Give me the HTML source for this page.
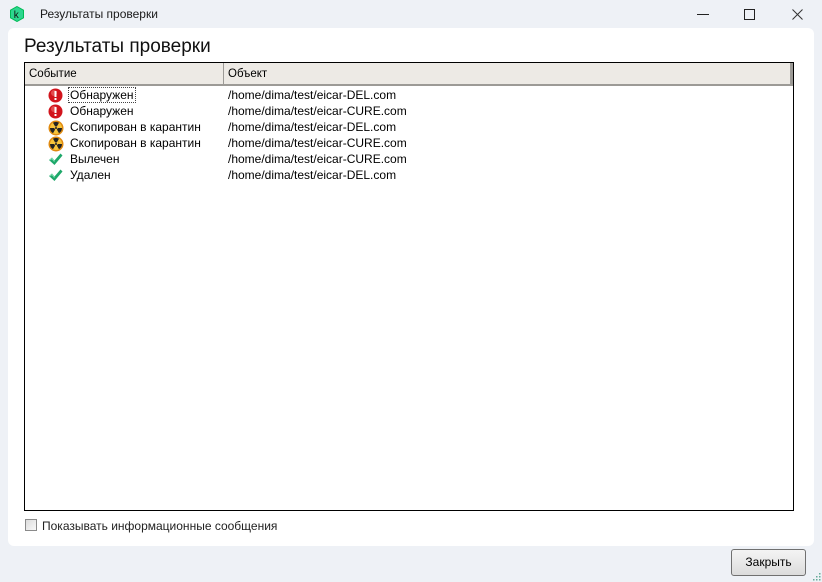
<!DOCTYPE html>
<html><head><meta charset="utf-8"><style>
*{margin:0;padding:0;box-sizing:border-box}
body{width:822px;height:582px;background:#eef1f6;font-family:"Liberation Sans","DejaVu Sans",sans-serif;position:relative;overflow:hidden;color:#000}
.title{position:absolute;left:40px;top:7px;font-size:12px;color:#1a1a1a}
.logo{position:absolute;left:9px;top:6px}
.panel{position:absolute;left:8px;top:28px;width:806px;height:518px;background:#fff;border-radius:6px}
h1{position:absolute;left:24px;top:36px;font-size:19px;font-weight:normal;color:#111}
.table{position:absolute;left:24px;top:62px;width:770px;height:449px;border:1px solid #000}
.hdr{position:absolute;left:0;top:0;width:768px;height:23px;background:#edeae5;border-bottom:2px solid #9c9a96;border-right:3px solid #9c9a96;font-size:11.5px}
.hdr span{position:absolute;top:5px}
.sep{position:absolute;left:198px;top:0;width:1px;height:21px;background:#9c9a96}
.row{position:absolute;left:0;height:16px;font-size:12px;width:768px}
.row .ic{position:absolute;left:23px;top:0}
.row .e{position:absolute;left:45px;top:0.5px}
.row .o{position:absolute;left:203px;top:0.5px}
.focus{outline:1px dotted #444;outline-offset:0;padding:0 1px;margin-left:-1px}
.cb{position:absolute;left:25px;top:519px;width:12px;height:12px;border:1px solid #8a8a8a;background:linear-gradient(135deg,#dcdcdc,#f8f8f8)}
.cbl{position:absolute;left:42px;top:519px;font-size:12px;color:#222}
.btn{position:absolute;left:731px;top:549px;width:75px;height:27px;border:1px solid #707070;border-radius:3px;background:linear-gradient(#f4f4f4,#dcdcdc);font-size:12px;text-align:center;line-height:25px;color:#000}
</style></head><body>
<svg class="logo" width="16" height="16" viewBox="0 0 16 16"><polygon points="8,0.5 14.5,4.2 14.5,11.8 8,15.5 1.5,11.8 1.5,4.2" fill="#2dd68f" stroke="#0b5" stroke-width="1"/><text x="4.8" y="12" font-size="10" font-family="Liberation Sans" fill="#111">k</text></svg>
<div class="title">Результаты проверки</div>
<svg style="position:absolute;left:697px;top:14px" width="12" height="2"><rect width="12" height="1" fill="#222"/></svg>
<svg style="position:absolute;left:744px;top:9px" width="12" height="12"><rect x="0.5" y="0.5" width="10" height="10" fill="none" stroke="#222"/></svg>
<svg style="position:absolute;left:792px;top:9px" width="12" height="12"><path d="M0.5 0.5L10.5 10.5M10.5 0.5L0.5 10.5" stroke="#333" stroke-width="1"/></svg>
<div class="panel"></div>
<h1>Результаты проверки</h1>
<div class="table">
<div class="hdr"><span style="left:4px">Событие</span><div class="sep"></div><span style="left:203px">Объект</span></div>
<div class="row" style="top:24.5px"><svg class="ic" width="15" height="15"><circle cx="7.5" cy="7.5" r="7" fill="#d2141c"/><circle cx="6" cy="5" r="3" fill="#f07070" opacity=".6"/><rect x="6.5" y="3" width="2" height="6" fill="#fff"/><rect x="6.5" y="10" width="2" height="2" fill="#fff"/></svg><span class="e focus">Обнаружен</span><span class="o">/home/dima/test/eicar-DEL.com</span></div>
<div class="row" style="top:40.5px"><svg class="ic" width="15" height="15"><circle cx="7.5" cy="7.5" r="7" fill="#d2141c"/><circle cx="6" cy="5" r="3" fill="#f07070" opacity=".6"/><rect x="6.5" y="3" width="2" height="6" fill="#fff"/><rect x="6.5" y="10" width="2" height="2" fill="#fff"/></svg><span class="e">Обнаружен</span><span class="o">/home/dima/test/eicar-CURE.com</span></div>
<div class="row" style="top:56.5px"><svg class="ic" width="16" height="16"><circle cx="8" cy="8" r="7.5" fill="#e08a10"/><circle cx="8" cy="8" r="6" fill="#f7c33a"/><path d="M8 8L5 2.8A6 6 0 0 1 11 2.8Z M8 8L14 8A6 6 0 0 1 11 13.2Z M8 8L5 13.2A6 6 0 0 1 2 8Z" fill="#222"/><circle cx="8" cy="8" r="1.6" fill="#f7c33a"/><circle cx="8" cy="8" r="1" fill="#222"/></svg><span class="e">Скопирован в карантин</span><span class="o">/home/dima/test/eicar-DEL.com</span></div>
<div class="row" style="top:72.5px"><svg class="ic" width="16" height="16"><circle cx="8" cy="8" r="7.5" fill="#e08a10"/><circle cx="8" cy="8" r="6" fill="#f7c33a"/><path d="M8 8L5 2.8A6 6 0 0 1 11 2.8Z M8 8L14 8A6 6 0 0 1 11 13.2Z M8 8L5 13.2A6 6 0 0 1 2 8Z" fill="#222"/><circle cx="8" cy="8" r="1.6" fill="#f7c33a"/><circle cx="8" cy="8" r="1" fill="#222"/></svg><span class="e">Скопирован в карантин</span><span class="o">/home/dima/test/eicar-CURE.com</span></div>
<div class="row" style="top:88.5px"><svg class="ic" width="15" height="15"><path d="M1 8L4 5.5L6.5 8.5L12.5 1.5L14.5 3.5L6.5 13Z" fill="#1ea86a"/><path d="M2 8L4 6.5L6.5 9.5" stroke="#7fe0b0" fill="none"/></svg><span class="e">Вылечен</span><span class="o">/home/dima/test/eicar-CURE.com</span></div>
<div class="row" style="top:104.5px"><svg class="ic" width="15" height="15"><path d="M1 8L4 5.5L6.5 8.5L12.5 1.5L14.5 3.5L6.5 13Z" fill="#1ea86a"/><path d="M2 8L4 6.5L6.5 9.5" stroke="#7fe0b0" fill="none"/></svg><span class="e">Удален</span><span class="o">/home/dima/test/eicar-DEL.com</span></div>
</div>
<div class="cb"></div>
<div class="cbl">Показывать информационные сообщения</div>
<div class="btn">Закрыть</div>
<svg style="position:absolute;left:812px;top:572px" width="10" height="10"><g fill="#6a9"><rect x="7" y="1" width="1.5" height="1.5"/><rect x="4" y="4" width="1.5" height="1.5"/><rect x="7" y="4" width="1.5" height="1.5"/><rect x="1" y="7" width="1.5" height="1.5"/><rect x="4" y="7" width="1.5" height="1.5"/><rect x="7" y="7" width="1.5" height="1.5"/></g></svg>
</body></html>
